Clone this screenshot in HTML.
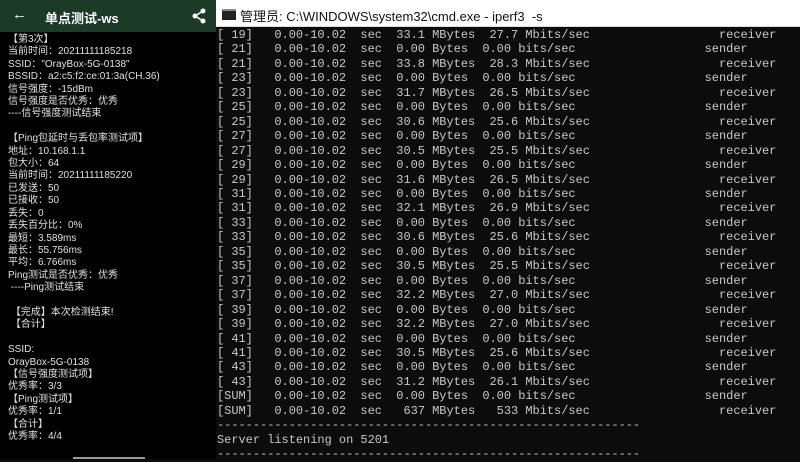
<!DOCTYPE html>
<html><head><meta charset="utf-8"><style>
*{margin:0;padding:0;box-sizing:border-box}
body{width:800px;height:459px;overflow:hidden;background:#0c0c0c;position:relative;font-family:"Liberation Sans","Noto Sans CJK SC",sans-serif}
#left{position:absolute;left:0;top:0;width:216px;height:459px;background:#000}
#hdr{position:absolute;left:0;top:0;width:216px;height:32px;background:#1b3a28;color:#fff}
#hdr .t{position:absolute;left:45px;top:8px;font-size:13px;font-weight:bold}
#hdr .b{position:absolute;left:12px;top:6px;font-size:15px}
#ltxt{position:absolute;left:8px;top:34px;font-size:10px;line-height:12.4px;color:#e0e0e0;white-space:pre}
#tb{position:absolute;left:216px;top:0;width:584px;height:27px;background:#fff;border-bottom:1px solid #ddd}
#tb .t{position:absolute;left:24px;top:6px;font-size:13px;color:#111;white-space:pre}
#tb .ic{position:absolute;left:6px;top:9px;width:14px;height:11px;background:#222;border-top:2px solid #888}
#term{position:absolute;left:217px;top:28px;font-family:"Liberation Mono",monospace;font-size:12px;letter-spacing:-0.03px;line-height:14.46px;color:#c8c8c8;white-space:pre}
</style></head><body>
<div id="left">
<div id="hdr"><span class="b">←</span><span class="t">单点测试-ws</span>
<svg style="position:absolute;left:192px;top:8px" width="14" height="16" viewBox="0 0 14 16"><circle cx="11" cy="3" r="2.5" fill="#fff"/><circle cx="3" cy="8" r="2.5" fill="#fff"/><circle cx="11" cy="13" r="2.5" fill="#fff"/><path d="M11 3L3 8L11 13" stroke="#fff" stroke-width="1.5" fill="none"/></svg></div>
<div id="ltxt">【第3次】
当前时间：20211111185218
SSID："OrayBox-5G-0138"
BSSID：a2:c5:f2:ce:01:3a(CH.36)
信号强度：-15dBm
信号强度是否优秀：优秀
----信号强度测试结束

【Ping包延时与丢包率测试项】
地址：10.168.1.1
包大小：64
当前时间：20211111185220
已发送：50
已接收：50
丢失：0
丢失百分比：0%
最短：3.589ms
最长：55.756ms
平均：6.766ms
Ping测试是否优秀：优秀
 ----Ping测试结束

 【完成】本次检测结束!
 【合计】

SSID:
OrayBox-5G-0138
【信号强度测试项】
优秀率：3/3
【Ping测试项】
优秀率：1/1
【合计】
优秀率：4/4</div>
<div style="position:absolute;left:73px;top:457px;width:72px;height:2px;background:#999"></div>
</div>
<div id="tb"><div class="ic"></div><span class="t">管理员: C:\WINDOWS\system32\cmd.exe - iperf3  -s</span></div>
<div id="term">[ 19]   0.00-10.02  sec  33.1 MBytes  27.7 Mbits/sec                  receiver
[ 21]   0.00-10.02  sec  0.00 Bytes  0.00 bits/sec                  sender
[ 21]   0.00-10.02  sec  33.8 MBytes  28.3 Mbits/sec                  receiver
[ 23]   0.00-10.02  sec  0.00 Bytes  0.00 bits/sec                  sender
[ 23]   0.00-10.02  sec  31.7 MBytes  26.5 Mbits/sec                  receiver
[ 25]   0.00-10.02  sec  0.00 Bytes  0.00 bits/sec                  sender
[ 25]   0.00-10.02  sec  30.6 MBytes  25.6 Mbits/sec                  receiver
[ 27]   0.00-10.02  sec  0.00 Bytes  0.00 bits/sec                  sender
[ 27]   0.00-10.02  sec  30.5 MBytes  25.5 Mbits/sec                  receiver
[ 29]   0.00-10.02  sec  0.00 Bytes  0.00 bits/sec                  sender
[ 29]   0.00-10.02  sec  31.6 MBytes  26.5 Mbits/sec                  receiver
[ 31]   0.00-10.02  sec  0.00 Bytes  0.00 bits/sec                  sender
[ 31]   0.00-10.02  sec  32.1 MBytes  26.9 Mbits/sec                  receiver
[ 33]   0.00-10.02  sec  0.00 Bytes  0.00 bits/sec                  sender
[ 33]   0.00-10.02  sec  30.6 MBytes  25.6 Mbits/sec                  receiver
[ 35]   0.00-10.02  sec  0.00 Bytes  0.00 bits/sec                  sender
[ 35]   0.00-10.02  sec  30.5 MBytes  25.5 Mbits/sec                  receiver
[ 37]   0.00-10.02  sec  0.00 Bytes  0.00 bits/sec                  sender
[ 37]   0.00-10.02  sec  32.2 MBytes  27.0 Mbits/sec                  receiver
[ 39]   0.00-10.02  sec  0.00 Bytes  0.00 bits/sec                  sender
[ 39]   0.00-10.02  sec  32.2 MBytes  27.0 Mbits/sec                  receiver
[ 41]   0.00-10.02  sec  0.00 Bytes  0.00 bits/sec                  sender
[ 41]   0.00-10.02  sec  30.5 MBytes  25.6 Mbits/sec                  receiver
[ 43]   0.00-10.02  sec  0.00 Bytes  0.00 bits/sec                  sender
[ 43]   0.00-10.02  sec  31.2 MBytes  26.1 Mbits/sec                  receiver
[SUM]   0.00-10.02  sec  0.00 Bytes  0.00 bits/sec                  sender
[SUM]   0.00-10.02  sec   637 MBytes   533 Mbits/sec                  receiver
-----------------------------------------------------------
Server listening on 5201
-----------------------------------------------------------</div>
</body></html>
